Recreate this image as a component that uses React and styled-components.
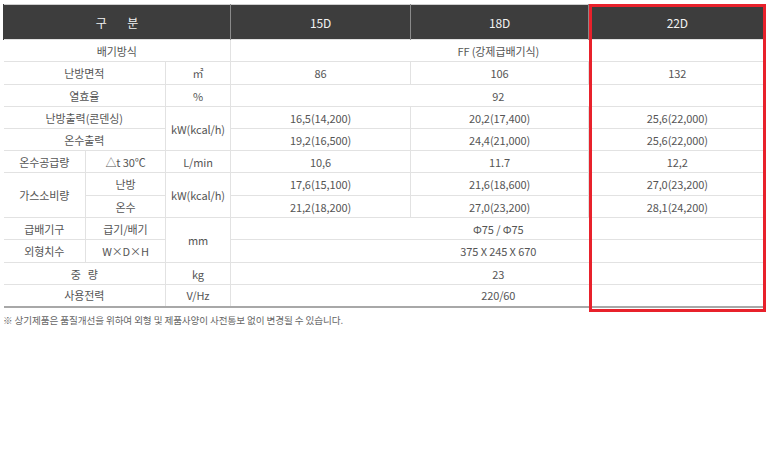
import React from "react";
import styled, { createGlobalStyle } from "styled-components";

const GlobalStyle = createGlobalStyle`
  html, body {
    margin: 0;
    padding: 0;
    background: #fff;
  }
  body {
    font-family: "Noto Sans CJK KR", "Noto Sans", "Liberation Sans", sans-serif;
  }
`;

const Page = styled.div`
  padding: 4px 0 0 3px;
  width: 773px;
  box-sizing: border-box;
`;

const TableWrap = styled.div`
  position: relative;
  width: 762px;
`;

const SpecTable = styled.table`
  width: 762px;
  border-collapse: collapse;
  table-layout: fixed;
  border-top: 1px solid #cfcfcf;
  border-bottom: 2px solid #a8a8a8;
  font-size: 11px;
  color: #555;
  letter-spacing: -0.1px;
`;

const Head = styled.th`
  height: 34px;
  padding: 0;
  background: #3d3d3d;
  color: #f2f2f2;
  font-weight: 400;
  font-size: 12px;
  border-left: 1px solid ${(p) => (p.$first ? "#3d3d3d" : "#8a8a8a")};
  word-spacing: ${(p) => (p.$spaced ? "18px" : "0")};
`;

const Row = styled.tr`
  height: ${(p) => (p.$tall ? "23px" : "22px")};
`;

const Cell = styled.td`
  padding: 0;
  text-align: center;
  vertical-align: middle;
  border-top: 1px solid #e2e2e2;
  border-left: 1px solid #e2e2e2;
  white-space: nowrap;
  &:first-child {
    border-left: none;
  }
`;

const RedFrame = styled.div`
  position: absolute;
  left: 586px;
  top: 0;
  width: 171px;
  height: 302px;
  border: 3.5px solid #e8212b;
`;

const Note = styled.p`
  margin: 5px 0 0;
  font-size: 9.6px;
  color: #666;
  letter-spacing: -0.1px;
`;

export default function App() {
  return (
    <Page>
      <GlobalStyle />
      <TableWrap>
        <SpecTable>
          <colgroup>
            <col style={{ width: 82 }} />
            <col style={{ width: 80 }} />
            <col style={{ width: 65 }} />
            <col style={{ width: 180 }} />
            <col style={{ width: 178 }} />
            <col style={{ width: 177 }} />
          </colgroup>
          <thead>
            <tr>
              <Head colSpan={3} $first $spaced>
                구 분
              </Head>
              <Head>15D</Head>
              <Head>18D</Head>
              <Head>22D</Head>
            </tr>
          </thead>
          <tbody>
            <Row>
              <Cell colSpan={3}>배기방식</Cell>
              <Cell colSpan={3}>FF (강제급배기식)</Cell>
            </Row>
            <Row $tall>
              <Cell colSpan={2}>난방면적</Cell>
              <Cell>㎡</Cell>
              <Cell>86</Cell>
              <Cell>106</Cell>
              <Cell>132</Cell>
            </Row>
            <Row>
              <Cell colSpan={2}>열효율</Cell>
              <Cell>%</Cell>
              <Cell colSpan={3}>92</Cell>
            </Row>
            <Row>
              <Cell colSpan={2}>난방출력(콘덴싱)</Cell>
              <Cell rowSpan={2}>kW(kcal/h)</Cell>
              <Cell>16,5(14,200)</Cell>
              <Cell>20,2(17,400)</Cell>
              <Cell>25,6(22,000)</Cell>
            </Row>
            <Row>
              <Cell colSpan={2}>온수출력</Cell>
              <Cell>19,2(16,500)</Cell>
              <Cell>24,4(21,000)</Cell>
              <Cell>25,6(22,000)</Cell>
            </Row>
            <Row>
              <Cell>온수공급량</Cell>
              <Cell>△t 30℃</Cell>
              <Cell>L/min</Cell>
              <Cell>10,6</Cell>
              <Cell>11.7</Cell>
              <Cell>12,2</Cell>
            </Row>
            <Row $tall>
              <Cell rowSpan={2}>가스소비량</Cell>
              <Cell>난방</Cell>
              <Cell rowSpan={2}>kW(kcal/h)</Cell>
              <Cell>17,6(15,100)</Cell>
              <Cell>21,6(18,600)</Cell>
              <Cell>27,0(23,200)</Cell>
            </Row>
            <Row>
              <Cell style={{ borderLeft: "1px solid #e2e2e2" }}>온수</Cell>
              <Cell>21,2(18,200)</Cell>
              <Cell>27,0(23,200)</Cell>
              <Cell>28,1(24,200)</Cell>
            </Row>
            <Row>
              <Cell>급배기구</Cell>
              <Cell>급기/배기</Cell>
              <Cell rowSpan={2}>mm</Cell>
              <Cell colSpan={3}>Φ75 / Φ75</Cell>
            </Row>
            <Row $tall>
              <Cell>외형치수</Cell>
              <Cell>W×D×H</Cell>
              <Cell colSpan={3}>375 X 245 X 670</Cell>
            </Row>
            <Row>
              <Cell colSpan={2}>중&nbsp;&nbsp;&nbsp;량</Cell>
              <Cell>kg</Cell>
              <Cell colSpan={3}>23</Cell>
            </Row>
            <Row>
              <Cell colSpan={2}>사용전력</Cell>
              <Cell>V/Hz</Cell>
              <Cell colSpan={3}>220/60</Cell>
            </Row>
          </tbody>
        </SpecTable>
        <RedFrame />
      </TableWrap>
      <Note>※ 상기제품은 품질개선을 위하여 외형 및 제품사양이 사전통보 없이 변경될 수 있습니다.</Note>
    </Page>
  );
}
